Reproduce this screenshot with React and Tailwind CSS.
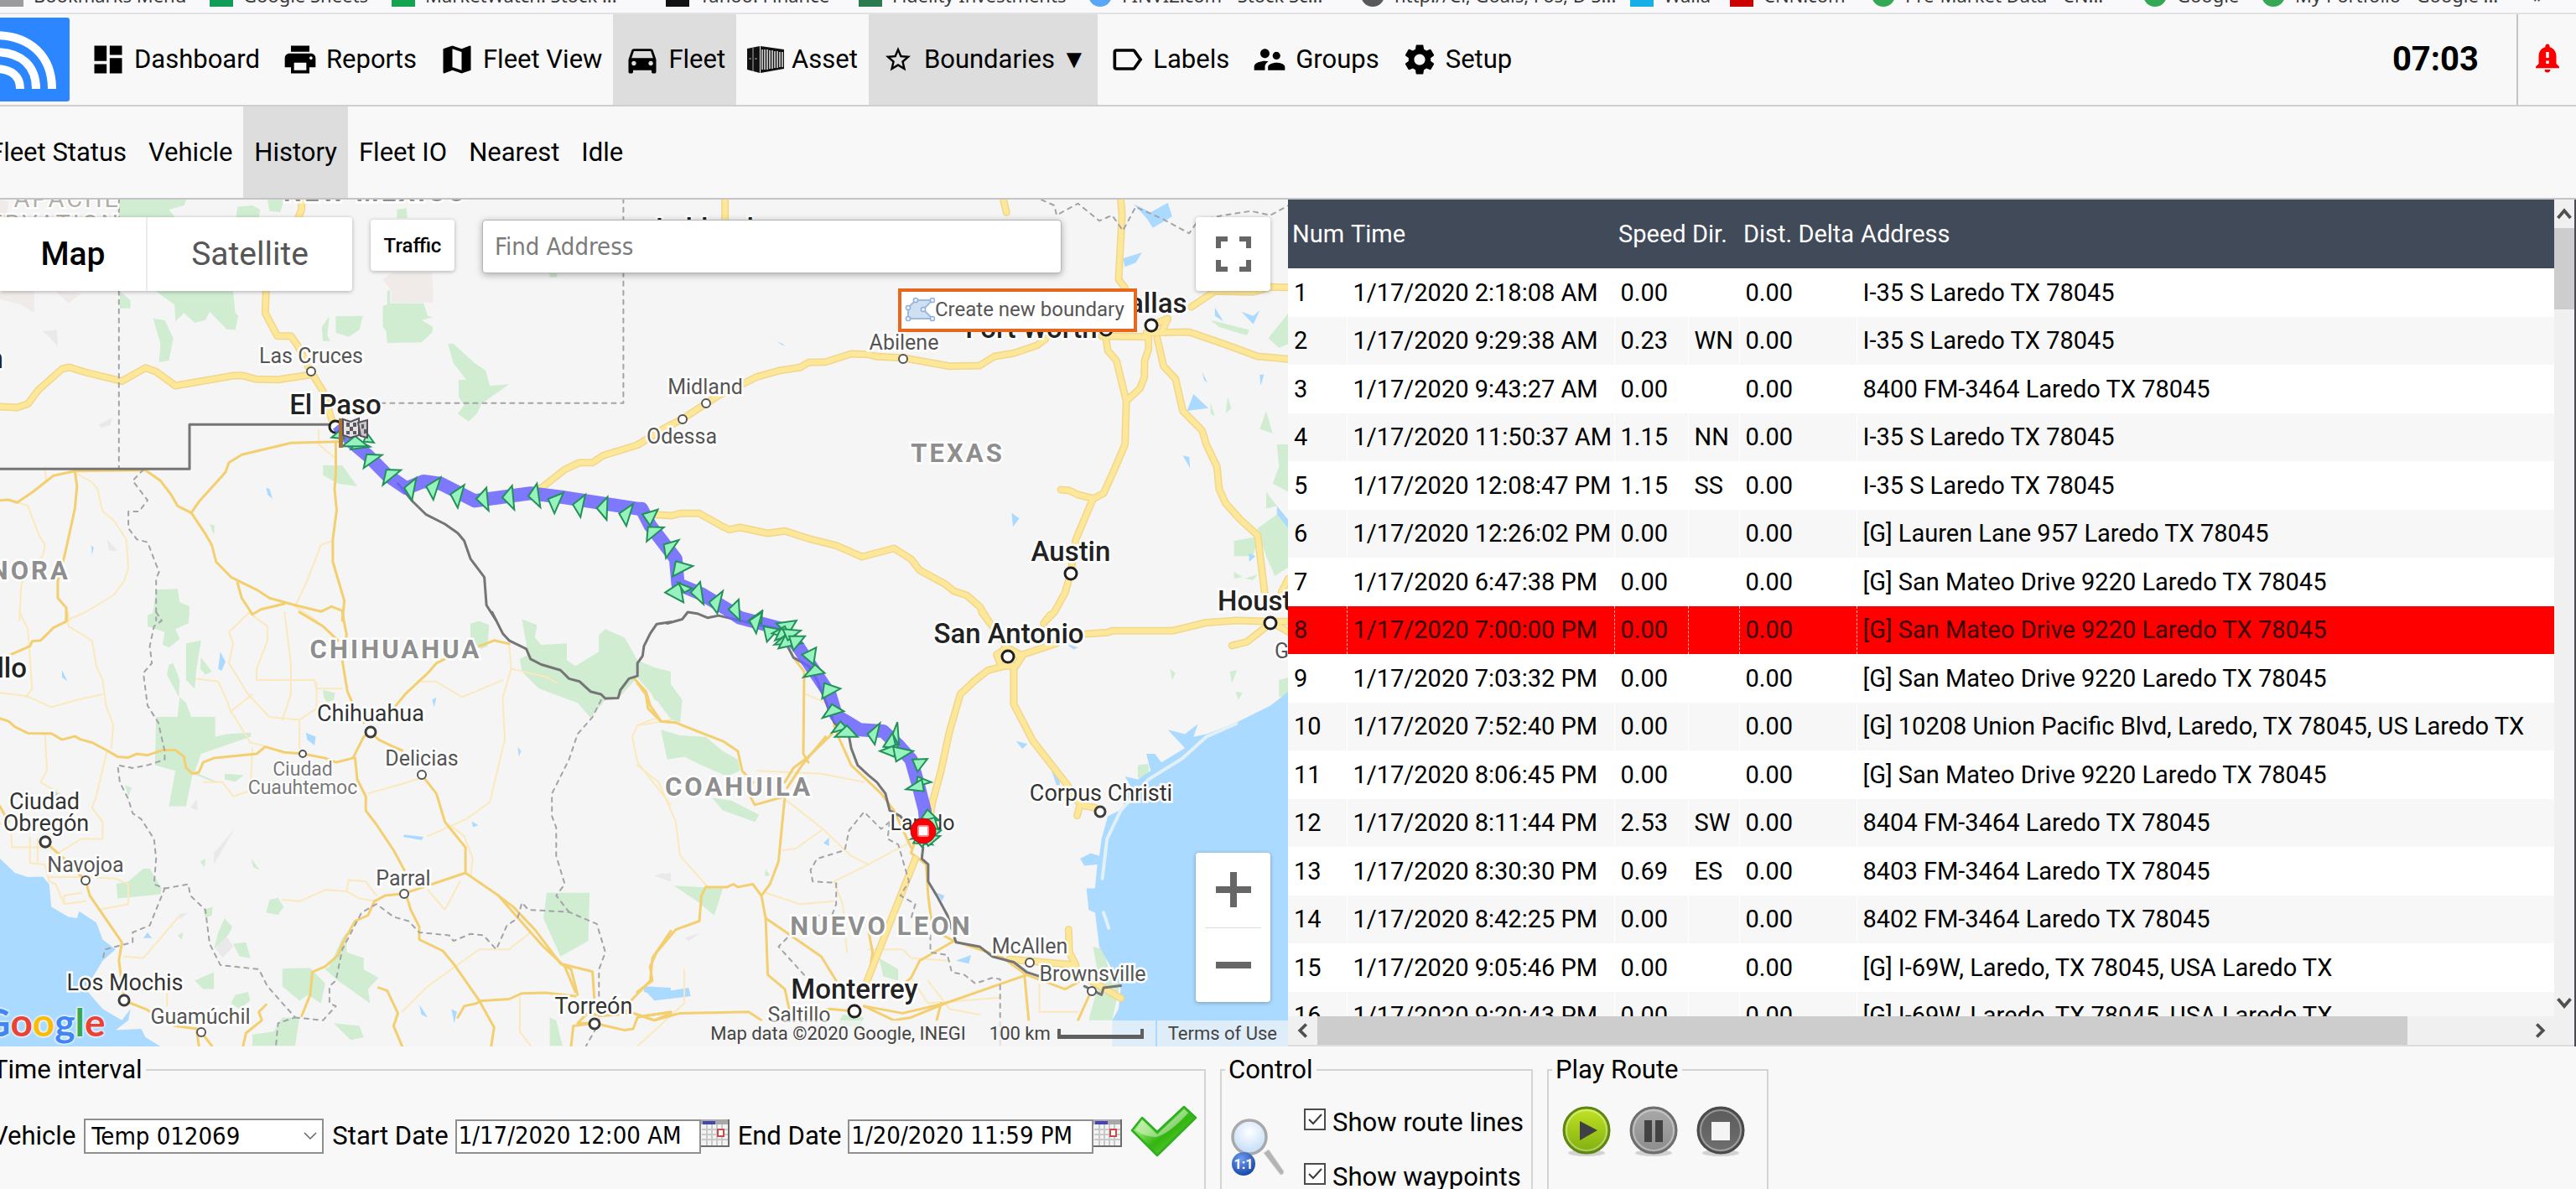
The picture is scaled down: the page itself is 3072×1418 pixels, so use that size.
import React from "react";
import {
  MdDashboard,
  MdPrint,
  MdMap,
  MdDirectionsCar,
  MdStarBorder,
  MdLabelOutline,
  MdSupervisorAccount,
  MdSettings,
  MdNotificationImportant,
} from "react-icons/md";

/* ---------- map tiles: each tile has its own grid ---------- */
const TILES = {
  nw: [0, -8, 1.96, 3],
  ne: [760, -8, 1.96, 3],
  sw: [0, 492, 1.96, 2.958],
  se: [760, 492, 1.96, 2.958],
};

function pts(tile, text) {
  const [ox, oy, sx, sy] = TILES[tile];
  return text
    .trim()
    .split(/\s+/)
    .map((p) => {
      const [x, y] = p.split(",").map(Number);
      return `${Math.round((ox + x / sx) * 10) / 10},${Math.round((oy + y / sy) * 10) / 10}`;
    })
    .join(" ");
}

const GREEN = {
  nw: [
    "278,20 437,20 430,45 395,60 410,90 278,90",
    "552,88 555,50 590,45 608,60 605,88",
    "625,20 665,20 655,70 630,65",
    "928,60 950,55 952,90 928,90",
    "365,352 545,352 550,430 557,440 550,490 530,488 490,425 480,455 455,465 430,430 410,460 408,400 380,370",
    "280,352 305,385 305,413 280,413",
    "358,450 385,455 405,520 395,600 372,605 375,540",
    "755,530 752,480 770,440 765,510 772,530",
    "785,442 848,440 840,490 815,515 785,500",
    "905,350 912,350 912,395 990,395 1000,440 1012,445 985,455 1012,480 1010,500 985,535 905,537 903,495 895,480 895,405 905,400",
    "1047,540 1060,540 1110,610 1135,635 1145,690 1190,685 1125,755 1115,790 1095,818 1070,790 1085,760 1072,730 1072,670 1090,668 1060,610",
    "755,975 800,975 835,1050 790,1040 755,1010",
    "365,1420 415,1417 420,1465 443,1480 440,1530 355,1530",
    "490,1185 502,1190 500,1225",
    "1285,285 1302,285 1302,302 1285,302",
  ],
  ne: [
    "1340,455 1430,490 1425,510 1360,480",
    "1475,520 1522,430 1522,540 1500,555",
    "1470,780 1485,860 1455,845",
    "1495,900 1522,900 1522,1070 1485,1040 1500,980",
    "1470,1070 1495,1120 1470,1130",
    "1450,1200 1500,1145 1522,1180 1522,1340 1490,1370 1470,1300 1455,1230",
    "1395,1245 1450,1230 1440,1300 1395,1300",
    "1340,750 1350,800 1340,790",
    "1380,730 1388,770 1375,790",
    "1395,1355 1415,1375 1395,1380",
    "1420,1380 1450,1365 1440,1385",
  ],
  sw: [
    "365,0 443,0 440,40 410,60 420,95 395,125 380,115 385,70 345,50 345,10",
    "435,110 470,100 460,190 455,270 435,240",
    "395,185 405,180 420,240 418,300 390,220",
    "470,160 495,210 480,220 468,200",
    "420,300 435,320 447,370 503,370 503,440 530,430 587,425 585,440 470,500 455,565 510,600 500,600 450,570 435,685 395,685 400,640 410,560 362,540 365,370 415,370",
    "525,570 570,575 550,598 525,590",
    "1100,40 1120,32 1143,45 1140,120 1125,130 1100,100",
    "1220,25 1255,45 1250,90 1265,115 1325,110 1325,170 1345,190 1400,140 1400,80 1415,60 1460,90 1490,170 1490,230 1445,305 1415,310 1380,372 1350,320 1260,270 1220,210 1215,165 1235,150",
    "1490,170 1530,195 1568,210 1568,330 1530,310 1510,250 1490,230",
    "755,275 783,285 780,310 765,318 757,300",
    "1278,990 1378,990 1375,1160 1310,1215 1270,1080",
    "272,958 300,950 335,905 350,905 378,975 375,995 275,1010",
    "622,1060 630,1015 650,1008 663,1040 650,1068",
    "660,1258 725,1255 760,1310 750,1380 720,1350 700,1370 660,1320",
    "770,1250 800,1150 810,1130 810,1200 850,1220 850,1260 885,1290 860,1330 865,1380 790,1300 760,1260",
    "500,1190 510,1130 525,1080 543,1110 535,1135",
    "545,1170 575,1165 585,1220 560,1215",
    "540,1380 550,1350 580,1340 585,1370 560,1400",
    "590,1490 640,1480 660,1430 700,1430 690,1530 590,1530",
    "780,1450 840,1460 850,1500 820,1510",
    "1285,1430 1300,1440 1315,1530 1285,1530",
    "455,1300 500,1270 500,1330 475,1330",
    "468,880 480,870 478,900",
    "587,870 607,910 592,900",
    "475,1050 497,1040 495,1070 480,1078",
    "415,1140 428,1130 425,1155",
    "292,610 308,620 300,650",
  ],
  se: [
    "0,175 60,215 105,310 100,390 80,380 40,300 0,230",
    "55,415 100,435 160,440 200,490 235,520 240,560 210,580 150,540 110,510 70,520",
    "175,655 220,665 285,715 275,740 200,700",
    "85,965 200,975 180,1070 140,1020",
    "565,1220 610,1260 610,1300 575,1285",
    "1170,540 1195,535 1195,580 1170,585",
    "1065,1180 1090,1190 1100,1250 1130,1300 1110,1440 1055,1440 1080,1300",
    "1245,200 1258,215 1250,240",
    "1385,210 1402,205 1390,250",
    "1398,280 1415,285 1405,310",
    "1500,240 1522,230 1522,290 1500,300",
    "480,1420 530,1430 520,1470 470,1450",
    "300,905 310,930 298,930",
  ],
};

const BEIGE = {
  nw: [
    "915,285 1010,285 1013,392 915,392 915,350 895,310",
    "0,352 80,352 80,430 50,400 0,380",
    "130,352 190,360 160,395",
    "0,25 20,30 15,90 0,90",
  ],
};

const SHADE = {
  nw: ["100,495 133,490 135,550 118,520", "230,830 262,805 258,830 238,840", "250,1240 275,1280 255,1280"],
  sw: [
    "520,1120 545,1180 520,1220 505,1190",
    "445,690 460,660 462,700",
    "500,850 550,760 500,890",
    "1530,930 1568,920 1568,950",
    "440,1060 420,1085 420,1065",
  ],
  se: ["40,930 60,920 80,945", "110,1150 150,1130 120,1160"],
};

const WATER = {
  nw: ["622,1055 630,1060 637,1095 626,1080", "213,1260 219,1270 215,1295"],
  ne: [
    "1160,40 1200,70 1240,35 1250,85 1205,125 1190,90",
    "1135,235 1180,213 1165,250 1140,265",
    "325,532 345,550 340,540",
    "1350,410 1370,460 1350,440",
    "1412,425 1440,440 1455,420 1440,470",
    "1300,720 1335,770 1285,780",
    "1320,640 1333,680 1325,670",
    "1275,940 1290,945 1292,985",
    "875,1145 893,1165 878,1195",
    "1455,650 1465,650 1457,690",
    "1430,1290 1445,1300 1430,1320",
    "1495,1120 1522,1170 1522,1200 1495,1150",
  ],
  sw: [
    "0,870 35,920 65,935 100,933 115,960 120,1040 160,1075 180,1080 185,1055 225,1095 240,1155 270,1190 240,1230 200,1330 240,1400 285,1440 305,1400 300,1440 270,1475 330,1470 340,1500 375,1532 0,1532",
    "515,140 527,175 518,208 510,200",
    "145,205 158,245 145,230",
    "715,425 738,440 735,470 718,450",
    "1010,310 1020,300 1015,335",
    "945,785 990,793 985,805 942,793",
    "1505,1320 1568,1325 1568,1365 1505,1340",
    "335,1150 345,1130 355,1150",
    "1210,475 1218,490 1213,510",
    "1103,738 1118,752 1105,758",
    "980,1385 1000,1430 985,1420",
    "1055,1400 1068,1410 1062,1450",
    "130,625 137,640 130,650",
  ],
  se: [
    "1522,280 1480,330 1400,390 1330,430 1300,440 1310,395 1280,430 1240,415 1228,395 1280,480 1225,530 1210,500 1190,500 1200,560 1170,590 1140,580 1155,620 1130,650 1140,690 1100,720 1085,800 1080,860 1060,850 1035,870 1045,895 1075,890 1070,975 1050,975 1055,1050 1070,1060 1080,1180 1110,1260 1130,1330 1125,1400 1110,1440 1110,1532 1522,1532",
    "15,1330 60,1340 120,1325 125,1355 40,1370",
    "885,455 912,465 900,482",
    "745,1230 780,1210 775,1240",
    "435,815 448,795 448,825",
    "965,545 985,570 988,610 980,610",
    "700,990 718,1000 712,1020",
    "1000,110 1030,125 1020,132",
  ],
};

const ROAD_MINOR = {
  nw: [
    "180,1005 215,1035 228,1060 240,1140 265,1170 295,1240 300,1340 290,1390 265,1440 200,1500 155,1530",
    "40,1108 65,1120 90,1220 105,1260 100,1300 70,1340 50,1400 45,1530",
    "745,850 745,900 780,945",
    "690,1480 720,1380 750,1260 778,1245",
    "690,1480 740,1530",
    "105,980 108,1030",
  ],
  sw: [
    "160,0 160,50 215,100 225,190 240,240 248,330 265,400 260,480",
    "0,285 60,295 120,335 180,310 240,290",
    "45,0 65,60 75,270 60,300",
    "105,430 110,560 95,600 140,640",
    "250,490 225,650 215,690 240,740 240,800 190,800 130,855",
    "580,0 625,50 625,100 600,200 600,240 735,240 740,270 800,270",
    "580,5 535,70 545,110 535,180 580,290 630,370 700,380 700,480",
    "665,0 680,180 680,290 660,380",
    "740,250 740,340 700,380",
    "590,290 540,350 585,460 625,475",
    "460,235 510,245 530,310 540,355",
    "1190,112 1195,200 1175,300 1180,450 1145,670 1090,730 1000,790",
    "985,245 1020,245 1080,300 1175,240",
    "1195,200 1280,230 1300,250",
    "860,640 930,610 985,585",
    "660,1015 700,1020 760,980 810,985 840,1010 880,1020",
    "810,985 815,945 855,950 880,1000",
    "1240,1130 1190,1190 1120,1190 1000,1320 940,1410",
    "1000,980 1040,1050 1075,950",
    "1055,755 1085,790 1105,870 1100,930",
    "420,1070 370,1160 335,1220 290,1215",
    "475,600 520,600 545,650 585,630 590,480",
    "0,745 25,760 28,830 105,830",
    "70,795 70,885 105,890 115,950 130,960 150,1030 200,1020",
    "88,800 88,880",
    "150,1030 150,1000 190,990",
    "115,935 200,935 270,940 300,960 300,1030 230,1050",
    "390,1310 390,1390",
    "1215,1360 1215,1480 1240,1530",
    "1568,380 1490,400 1478,440 1490,530 1568,680",
  ],
  se: [
    "0,400 50,370",
    "0,540 50,600 90,740 100,860 165,970",
    "345,660 430,760 500,860 540,890 460,950 480,1030 490,1200",
    "300,990 380,1030 460,1020",
    "340,840 370,835 430,770",
    "640,810 540,890",
    "395,290 440,320",
    "280,560 430,570 530,600",
    "540,1190 620,1190 640,1220 730,1230",
    "940,1290 940,1410 1030,1410",
    "640,1290 680,1380 850,1360",
    "680,1300 730,1400 800,1420",
    "0,1532 110,1380 110,1260",
  ],
};

const ROAD_MID = {
  nw: [
    "0,1100 20,1098 40,1108 75,1072 125,1012 175,995 340,992 375,1030 400,1080 415,1120 447,1145 480,1220 495,1260 505,1320 540,1375 600,1420 630,1450 690,1475 750,1498 775,1480 800,1495",
    "175,995 180,1050 175,1130 165,1200 152,1290 135,1390 135,1450 155,1485 155,1530",
    "447,1145 465,1105 527,1000 535,965 565,937 680,895 790,890",
    "785,890 785,1000 782,1060 787,1135 778,1240 778,1320 805,1460 800,1530",
    "555,1395 565,1450 590,1508 610,1490 665,1470",
  ],
  sw: [
    "0,375 20,385 35,405 65,427 120,428 145,450 175,438 190,450 215,460 250,488 275,510 300,513 320,500 345,505 380,487 410,487 430,510 435,550 450,570 465,565 475,530 500,515 600,500 620,475 665,495 708,500 760,515 785,530 825,515 850,440 866,423",
    "800,0 810,80 800,170 812,280 825,325 850,390",
    "700,0 755,50 790,100",
    "25,150 70,120 75,103 95,100 125,55 155,33 155,0",
    "925,330 950,285 1000,215 1020,180 1040,165",
    "1120,120 1155,100 1190,112",
    "830,515 835,590 855,650 855,700 880,750 920,840 945,910",
    "866,423 885,450 920,475 940,488",
    "985,573 1020,640 1040,740 1088,830 1088,920 1165,1000 1200,1040 1250,1120 1310,1240 1335,1260 1350,1350",
    "1165,1000 1200,1060 1270,1180 1320,1250 1345,1340",
    "1088,920 990,970 944,993 900,1000 875,1020 860,1070 830,1090 800,1170 790,1210 760,1250 730,1270 725,1350 705,1425",
    "950,1000 960,1050 980,1110 980,1155 1035,1195 1060,1240 1120,1370 1155,1465 1148,1532",
    "1310,1240 1385,1268 1389,1360",
    "1070,1430 1085,1390 1115,1380 1120,1372 1190,1365 1220,1345 1275,1343 1345,1355",
    "885,1325 905,1335 930,1415 920,1460 940,1532",
    "1389,1450 1340,1460 1335,1530",
    "1389,1450 1350,1450 1370,1420 1400,1420",
    "1389,1450 1460,1475 1480,1470 1490,1430 1568,1410",
    "1475,1370 1520,1300 1525,1220 1568,1125",
    "1400,1425 1480,1415 1530,1440 1568,1415",
    "1450,1400 1500,1425 1568,1412",
    "105,810 150,870 200,947 210,1000 285,1165 278,1230 285,1310 291,1371 340,1400 410,1460 460,1470 470,1482 495,1530",
    "460,1480 465,1530",
    "622,1385 605,1410 612,1440 575,1485 568,1532",
    "0,685 20,740",
    "1480,230 1510,280 1520,330 1545,385 1568,388",
  ],
  se: [
    "0,250 20,290 25,340 55,385 90,390 140,420 200,455 235,490 245,560 270,600 260,640 275,680 345,650",
    "345,650 330,880 310,960 290,1000 270,960 235,970 225,960 210,970 160,970 150,1000 145,1090 90,1120 45,1200 30,1250 35,1300 0,1340",
    "345,600 365,550 400,510 455,430",
    "350,620 385,540 440,440",
    "365,160 390,210 388,500 400,530",
    "460,400 470,440 500,540 570,640 600,700 640,830",
    "290,1000 300,1080 430,1215 465,1300",
    "300,1080 305,1280 345,1330 355,1400",
    "0,1420 40,1440 100,1415 260,1410 290,1440",
    "655,780 640,850 675,890 680,1000 690,1120 740,1160",
    "740,1160 660,1230 640,1290 600,1340",
    "740,1160 850,1215 910,1280 1000,1330 1050,1290",
    "905,1280 915,1440",
    "540,1120 550,1200 540,1300",
    "1060,1340 1030,1440",
    "710,1380 700,1440",
    "530,1390 600,1440 640,1430 720,1380 910,1280",
    "530,1390 620,1415 720,1380",
    "400,1415 450,1400 507,1408",
  ],
};

const ROAD_MAIN = {
  nw: [
    "0,765 40,768 65,755 90,705 145,630 162,624 200,642 285,674 340,626 365,640 410,690 545,654 565,653 600,667 650,668 727,650",
    "705,20 705,60 697,90",
    "622,345 620,430 648,512 680,512 695,545 727,640 755,710 775,810",
    "1240,1080 1270,1050 1320,990 1355,965 1385,965 1410,940 1490,902 1568,830",
  ],
  ne: [
    "0,902 60,845 105,809 161,754 190,725 245,685 280,658 335,635 380,625 400,607 440,605 500,576 540,578 560,586 621,590 730,620 800,618 835,585 880,574 935,545 955,522",
    "25,1150 80,1155 100,1147 145,1147 195,1190 215,1205 240,1197 305,1218 345,1210 400,1237 465,1262 525,1302 600,1272 640,1310 660,1350 720,1400 740,1425 770,1440 800,1480 820,1530",
    "1130,20 1133,80 1125,310 1140,340",
    "1295,408 1350,352 1440,355 1480,337 1522,338",
    "1085,512 1190,515 1200,500 1290,498 1370,540 1450,585 1522,595",
    "1095,520 1100,565 1120,600 1143,745 1140,900 1115,990 1090,1075 1065,1095 1025,1240 1013,1362 1000,1430 975,1500 955,1530",
    "1195,520 1195,560 1186,600 1185,660 1175,700 1143,745",
    "1215,520 1230,620 1258,665 1275,780 1320,850 1330,900 1355,980 1360,1060 1375,1110 1410,1170 1450,1225 1460,1350 1468,1450",
    "990,1062 1010,1065 1030,1080 1065,1093",
    "205,20 205,95",
    "855,20 863,70",
    "1505,1430 1522,1380",
    "1201,475 1240,450 1225,500 1190,500",
  ],
  se: [
    "805,0 850,90 866,140",
    "965,10 950,40",
    "866,125 900,155 885,190 850,190 840,150 866,125",
    "890,155 980,110",
    "1050,77 1100,72 1110,66 1250,66 1330,37 1400,30 1480,33 1522,33",
    "1480,40 1450,75 1425,105 1390,118",
    "1480,33 1522,70",
    "860,190 820,205 790,240 755,290 730,420 710,560 690,670 680,760",
    "880,190 880,325 925,455 1005,610 1035,680 1070,690",
    "1035,680 1028,718",
    "1008,1120 1010,1200 1025,1245 870,1225",
    "1010,1245 1060,1300 1130,1362",
    "650,870 600,1060 545,1270 530,1330",
  ],
};

const STATE_LINES = {
  nw: [
    "278,20 278,985",
    "1457,20 1457,752 890,752",
    "335,990 310,1030 345,1100 325,1140 300,1140 300,1200 320,1240 345,1250 355,1290 365,1330 372,1355 365,1380 365,1530",
  ],
  ne: [
    "945,25 975,45 980,80 1030,38 1080,100 1110,80 1135,135 1165,50 1230,95 1290,145 1310,100 1370,80 1435,65 1480,80 1522,45",
  ],
  sw: [
    "365,0 378,30 360,50 350,120 355,180 335,215 345,330 370,390 385,490 385,520 345,540 310,550 275,540 280,600 300,660 310,710 330,730 360,800 365,870 360,960 385,975 350,1105 310,1130 310,1165 245,1190 240,1230",
    "385,975 440,960 445,1000 480,1050 490,1170 515,1245 605,1260 625,1320 690,1430 650,1450 645,1530",
    "690,1430 755,1440 785,1390 770,1380 770,1320 785,1300 800,1190 845,1060 880,1030 920,1075 955,1090 980,1130 1050,1140 1060,1160 1100,1135 1130,1140 1160,1190 1185,1105 1210,1080 1220,1025 1235,1050 1330,1058 1395,1100 1415,1200 1400,1260 1400,1450 1370,1530",
    "1405,310 1385,370 1350,430 1330,520 1290,640 1290,720 1300,760 1300,860 1320,960 1300,1000 1330,1058",
  ],
  se: [
    "590,740 570,765 530,705 495,770 485,840 420,870 405,910 410,950 465,955 465,1030 455,1070 420,1070",
    "590,740 585,800 610,820 635,950 615,1000 650,1030 640,1080",
    "685,1140 685,1200 725,1210 735,1270 765,1280 790,1310 830,1290 848,1295 848,1532",
    "350,1150 330,1180 390,1280",
  ],
};

const COUNTRY_LINES = {
  nw: [
    "0,988 443,988 443,829 780,829",
    "930,1040 965,1105 995,1150 1040,1185 1070,1217 1085,1245 1100,1310 1132,1375 1137,1475 1160,1530",
  ],
  sw: [
    "1150,0 1175,75 1190,100 1230,130 1240,165 1265,185 1310,205 1330,235 1355,245 1380,280 1405,290 1415,305 1445,303 1450,275 1470,235 1490,225 1490,180 1502,155 1505,120 1520,75 1535,42 1568,35",
  ],
  se: [
    "70,40 105,25 118,0 140,5 165,20 190,12 240,30 330,60 365,160 400,190 420,240 460,390 495,440 500,480 515,540 540,575 560,600 580,640 590,700 615,720 650,790 668,830 665,870 680,890 680,950 700,1000 725,1070 745,1165 800,1180 830,1215 880,1235 910,1270 940,1285",
    "1045,1320 1085,1350 1090,1325 1130,1318",
  ],
};

const ROUTE = [
  pts("nw", "790,830 825,895 860,940 905,1010 950,1057 990,1032 1030,1040 1110,1102 1240,1075 1320,1090 1490,1130"),
  pts("ne", "10,1130 30,1190 90,1310 95,1400 150,1435 210,1490"),
  pts("se", "240,20 340,60 375,120 410,200 450,290 465,365 520,415 575,420 610,470 640,520 655,600 672,700 675,760"),
].join(" ");

const ARROWS = {
  nw: [
    "850,985 857,935 893,938", "895,1045 903,990 937,992", "963,1100 945,1055 973,1020", "1013,1098 996,1050 1030,1018",
    "1070,1127 1053,1078 1085,1045", "1142,1137 1113,1095 1137,1055", "1202,1133 1174,1090 1197,1048", "1235,1085 1255,1040 1263,1125",
    "1296,1147 1281,1095 1317,1073", "1357,1160 1339,1115 1368,1080", "1418,1170 1395,1128 1420,1088", "1464,1192 1447,1147 1480,1113",
    "775,875 795,850 805,880", "850,890 858,860 874,893", "820,918 835,885 865,908", "800,907 830,870 860,907",
  ],
  ne: [
    "30,1190 12,1150 48,1133", "22,1247 25,1195 62,1197", "67,1307 62,1258 97,1242", "83,1372 90,1318 130,1335",
    "65,1430 100,1395 108,1465", "95,1395 128,1415 110,1430", "155,1472 125,1430 147,1392", "187,1505 168,1465 200,1425", "240,1530 213,1490 237,1455",
    "260,1530 292,1495 290,1540",
  ],
  se: [
    "278,75 262,30 292,0", "303,105 295,50 330,60", "325,40 372,30 352,80", "315,75 345,50 360,95", "322,100 335,60 375,70", "320,115 350,75 372,110",
    "330,128 345,85 385,110", "340,60 382,65 352,100", "365,135 355,85 392,85",
    "412,185 385,150 418,125", "388,230 415,185 438,215", "432,305 437,250 475,270", "433,373 455,325 483,350",
    "455,425 475,385 490,410", "462,440 490,400 515,440", "555,467 538,430 567,392", "597,430 608,388 612,470",
    "575,475 597,425 605,480", "567,490 610,465 600,510", "605,527 598,475 645,490", "655,563 643,520 678,518",
    "652,615 655,580 687,600", "628,625 665,590 670,632", "663,730 678,697 705,735",
    "655,740 695,725 705,775", "690,760 710,770 685,800", "640,800 670,770 705,795", "645,815 660,780 690,820", "680,825 665,785 708,790", "665,828 650,800 690,790",
  ],
};

function flat(source) {
  return Object.keys(source).flatMap((tile) => source[tile].map((p) => pts(tile, p)));
}

function Areas({ source, className }) {
  return (
    <g className={className}>
      {flat(source).map((p, i) => (
        <polygon key={i} points={p} />
      ))}
    </g>
  );
}

function Lines({ source, className }) {
  return (
    <g className={className} fill="none" strokeLinejoin="round" strokeLinecap="round">
      {flat(source).map((p, i) => (
        <polyline key={i} points={p} />
      ))}
    </g>
  );
}

const REGIONS = [
  [472, 547, "CHIHUAHUA"],
  [1142, 313, "TEXAS"],
  [881, 711, "COAHUILA"],
  [1051, 877, "NUEVO LEON"],
  [448, 2, "NEW MEXICO"],
];

const CITIES = [
  [400, 256, 400, 271, "El Paso"],
  [1277, 431, 1277, 446, "Austin"],
  [1203, 529, 1202, 545, "San Antonio"],
  [1230, 165, 1319, 155, "Fort Worth"],
  [1019, 953, 1019, 968, "Monterrey"],
  [1370, 135, 1373, 150, "Dallas"],
];

const TOWNS = [
  [442, 622, 442, 635, "Chihuahua"],
  [53, 727, 54, 766, "Ciudad"],
  [55, 753, 54, 766, "Obregón"],
  [149, 943, 148, 955, "Los Mochis"],
  [708, 971, 709, 983, "Torreón"],
  [1313, 717, 1312, 730, "Corpus Christi"],
];

const SMALL_TOWNS = [
  [371, 195, 371, 205, "Las Cruces"],
  [1078, 179, 1077, 190, "Abilene"],
  [841, 232, 842, 243, "Midland"],
  [813, 291, 814, 262, "Odessa"],
  [503, 675, 503, 686, "Delicias"],
  [102, 802, 102, 812, "Navojoa"],
  [481, 818, 482, 828, "Parral"],
  [239, 983, 240, 993, "Guamúchil"],
  [1228, 899, 1228, 910, "McAllen"],
  [1303, 932, 1302, 944, "Brownsville"],
];

function MapCanvas() {
  return (
    <svg
      className="block h-full w-full bg-[#f5f5f5] font-['Roboto',sans-serif]"
      viewBox="0 0 1536 1010"
      preserveAspectRatio="xMinYMin slice"
      aria-label="Route map"
    >
      <Areas source={BEIGE} className="fill-[#f0ebe8]" />
      <Areas source={SHADE} className="fill-[#e9e9e9]" />
      <Areas source={GREEN} className="fill-[#d0ecd1]" />
      <Areas source={WATER} className="fill-[#aadaff]" />
      <g fill="none" className="stroke-[#e3f0f4]" strokeWidth="4" strokeLinecap="round">
        <polyline points={pts("se", "1400,393 1330,440 1275,515 1195,590 1130,700 1098,800 1087,940")} />
        <polyline points={pts("se", "1090,1060 1102,1115")} />
      </g>
      <Lines source={ROAD_MINOR} className="stroke-[#fbe9bd] stroke-2" />
      <Lines source={ROAD_MID} className="stroke-[#f4cf70] stroke-3" />
      <Lines source={ROAD_MAIN} className="stroke-[#f3d68a] stroke-9" />
      <Lines source={ROAD_MAIN} className="stroke-[#fde799] stroke-6" />
      <Lines source={STATE_LINES} className="stroke-[#a3a3a8] stroke-2 [stroke-dasharray:5_6]" />
      <Lines source={COUNTRY_LINES} className="stroke-[#757575] stroke-3" />

      <g className="fill-[#8e8e8e] stroke-white text-[31px] font-bold tracking-widest [paint-order:stroke]" strokeWidth="5" textAnchor="middle">
        {REGIONS.map(([x, y, name]) => (
          <text key={name} x={x} y={y}>{name}</text>
        ))}
        <text x="84" y="453" textAnchor="end">SONORA</text>
      </g>
      <g className="fill-[#b3afa6] stroke-white text-[29px] tracking-widest [paint-order:stroke]" strokeWidth="4" textAnchor="end">
        <text x="144" y="9">APACHE</text>
        <text x="144" y="39">RESERVATION</text>
      </g>
      <g className="fill-[#222222] stroke-white text-[33px] font-medium [paint-order:stroke]" strokeWidth="5">
        <g textAnchor="middle">
          {CITIES.map(([x, y, , , name]) => (
            <text key={name} x={x} y={y}>{name}</text>
          ))}
        </g>
        <text x="845" y="46" textAnchor="middle">Lubbock</text>
        <text x="32" y="570" textAnchor="end">Hermosillo</text>
        <text x="4" y="201" textAnchor="end">Tucson</text>
        <text x="1452" y="490">Houston</text>
      </g>
      <g className="fill-[#333333] stroke-white text-[27px] [paint-order:stroke]" strokeWidth="5" textAnchor="middle">
        {TOWNS.map(([x, y, , , name]) => (
          <text key={name} x={x} y={y}>{name}</text>
        ))}
      </g>
      <g className="fill-[#555555] stroke-white text-[25px] [paint-order:stroke]" strokeWidth="5" textAnchor="middle">
        {SMALL_TOWNS.map(([x, y, , , name]) => (
          <text key={name} x={x} y={y}>{name}</text>
        ))}
        <text x="1100" y="752" className="fill-[#333333]">Laredo</text>
        <text x="953" y="981">Saltillo</text>
        <text x="1520" y="547" textAnchor="start">Galveston</text>
      </g>
      <g className="fill-[#7a7a7a] stroke-white text-[23px] [paint-order:stroke]" strokeWidth="4" textAnchor="middle">
        <text x="361" y="687">Ciudad</text>
        <text x="361" y="709">Cuauhtemoc</text>
      </g>
      <g className="fill-white stroke-[#1f1f1f] stroke-3">
        {CITIES.map(([, , cx, cy, name]) => (
          <circle key={name} cx={cx} cy={cy} r="7" />
        ))}
        <circle cx="1515" cy="505" r="7" />
      </g>
      <g className="fill-white stroke-[#3c3c3c] stroke-3">
        {TOWNS.map(([, , cx, cy, name]) => (
          <circle key={name} cx={cx} cy={cy} r="6" />
        ))}
      </g>
      <g className="fill-white stroke-[#555555] stroke-2">
        {SMALL_TOWNS.map(([, , cx, cy, name]) => (
          <circle key={name} cx={cx} cy={cy} r="5" />
        ))}
        <circle cx="361" cy="661" r="4" />
      </g>

      <polyline points={ROUTE} fill="none" className="stroke-[#6961ff]/85 stroke-16" strokeLinejoin="round" />
      <g className="fill-[#97f3bd] stroke-[#22915a] stroke-2" strokeLinejoin="miter">
        {flat(ARROWS).map((p, i) => (
          <polygon key={i} points={p} />
        ))}
      </g>

      <g>
        <rect x="404" y="261" width="5" height="35" fill="#a8743a" />
        <path d="M409 262 L418 265 L428 261 V281 L418 284 L409 281 Z" fill="#e6e2e4" stroke="#55505a" strokeWidth="2" />
        <path d="M427 266 L438 263 V284 L430 282 Z" fill="#c9c5c9" stroke="#55505a" strokeWidth="2" />
        <path d="M413 266h4v5h-4z M421 266h4v5h-4z M417 271h4v5h-4z M413 276h4v4h-4z M421 276h4v4h-4z M431 268h3v5h-3z M434 274h3v5h-3z" fill="#5d5962" />
      </g>
      <g>
        <circle cx="1101" cy="753" r="15" fill="#fb0007" stroke="#b51414" strokeWidth="1" />
        <rect x="1095" y="747" width="12" height="12" rx="2" fill="#ffffff" stroke="#ff8a8a" strokeWidth="2" />
      </g>
    </svg>
  );
}

/* ---------- header ---------- */
function ContainerIcon({ className }) {
  return (
    <svg viewBox="0 0 44 32" className={className} aria-hidden="true">
      <path d="M0 3 L15 0 V32 L0 28 Z" fill="#111" />
      <path d="M16 0 L44 4 V27 L16 32 Z" fill="#111" />
      <path d="M7 2V30 M2 15h3 M9 15h3" stroke="#aaa" strokeWidth="1" />
      <path d="M18 4V28 M21 4V28 M24 4V28 M27 5V27 M30 5V27 M33 6V26 M36 6V26 M39 7V25 M42 7V25" stroke="#f4f4f4" strokeWidth="1.4" />
    </svg>
  );
}

const NAV = [
  { label: "Dashboard", icon: MdDashboard, size: "h-11 w-11" },
  { label: "Reports", icon: MdPrint, size: "h-11 w-11" },
  { label: "Fleet View", icon: MdMap, size: "h-11 w-11" },
  { label: "Fleet", icon: MdDirectionsCar, size: "h-11 w-11", active: true },
  { label: "Asset", icon: ContainerIcon, size: "h-8 w-11" },
  { label: "Boundaries ▼", icon: MdStarBorder, size: "mx-1 h-9 w-9", active: true },
  { label: "Labels", icon: MdLabelOutline, size: "h-11 w-11" },
  { label: "Groups", icon: MdSupervisorAccount, size: "h-11 w-11" },
  { label: "Setup", icon: MdSettings, size: "h-11 w-11" },
];

const BOOKMARKS = [
  { text: "Bookmarks Menu", color: "bg-[#9b9b9b]", width: "w-[250px]" },
  { text: "Google Sheets", color: "bg-[#109d58]", width: "w-[217px]" },
  { text: "MarketWatch: Stock ...", color: "bg-[#14a351]", width: "w-[327px]" },
  { text: "Yahoo! Finance", color: "bg-[#111111]", width: "w-[230px]" },
  { text: "Fidelity Investments", color: "bg-[#2c7a4f]", width: "w-[274px]" },
  { text: "FINVIZ.com - Stock Sc...", color: "bg-[#58a6f5] rounded-full", width: "w-[325px]" },
  { text: "http://Cr, Goals, Fos, D S...", color: "bg-[#58595b] rounded-full", width: "w-[321px]" },
  { text: "Walla", color: "bg-[#18aee8]", width: "w-[119px]" },
  { text: "CNN.com", color: "bg-[#cc0000]", width: "w-[169px]" },
  { text: "Pre-Market Data - CN...", color: "bg-[#34a853] rounded-full", width: "w-[324px]" },
  { text: "Google", color: "bg-[#34a853] rounded-full", width: "w-[141px]" },
  { text: "My Portfolio - Google ...", color: "bg-[#34a853] rounded-full", width: "w-[324px]" },
];

function BookmarkBar() {
  return (
    <div className="flex h-[17px] shrink-0 items-start overflow-hidden border-b-2 border-[#e2e2e4] bg-[#f9f9fb] font-['Noto_Sans',sans-serif] text-[22px] leading-8 text-[#3a3a3a]">
      {BOOKMARKS.map((b) => (
        <div key={b.text} className={`-mt-[22px] flex shrink-0 items-center gap-3 overflow-hidden whitespace-nowrap ${b.width}`}>
          <span className={`h-7 w-7 shrink-0 ${b.color}`} />
          <span>{b.text}</span>
        </div>
      ))}
      <span className="-mt-[22px]">»</span>
    </div>
  );
}

function Header() {
  return (
    <header className="flex h-[110px] shrink-0 border-b-2 border-[#cfcfcf] bg-[#f8f8f8]">
      <div className="mr-[11px] flex w-[83px] items-center">
        <svg viewBox="0 0 83 100" className="h-[100px] w-full" aria-label="Logo">
          <path d="M0 0 H80 Q83 0 83 3 V97 Q83 100 80 100 H0 Z" fill="#2b86ff" />
          <g fill="none" stroke="#ffffff" strokeWidth="10">
            <path d="M-6 21 C 36 21 62 46 62 85" />
            <path d="M-6 41 C 26 41 43 58 43 85" />
            <path d="M-6 61 C 14 61 24 70 24 85" />
          </g>
        </svg>
      </div>
      <nav className="flex" aria-label="Main">
        {NAV.map(({ label, icon: Icon, active, size }) => (
          <a
            key={label}
            href="#"
            className={`flex items-center gap-[9px] whitespace-nowrap px-[13px] text-[31px] text-black ${active ? "bg-[#dddddd]" : ""}`}
          >
            <Icon className={size} />
            <span>{label}</span>
          </a>
        ))}
      </nav>
      <div className="ml-auto flex">
        <time className="flex items-center pr-[45px] text-[40px] font-bold">07:03</time>
        <button type="button" aria-label="Alerts" className="flex w-[71px] items-center justify-center border-l-2 border-[#c4c4c4] pb-1">
          <MdNotificationImportant className="h-[42px] w-[42px] text-[#fb0000]" />
        </button>
      </div>
    </header>
  );
}

const TABS = ["Fleet Status", "Vehicle", "History", "Fleet IO", "Nearest", "Idle"];

function SubNav() {
  return (
    <nav className="flex h-[111px] shrink-0 overflow-hidden border-b-2 border-[#c4c4c6] bg-[#f8f8f8]" aria-label="Fleet">
      <div className="-ml-[26px] flex">
        {TABS.map((t) => (
          <a
            key={t}
            href="#"
            className={`flex items-center whitespace-nowrap px-[13px] pt-0.5 text-[31px] text-black ${t === "History" ? "bg-[#dddddd]" : ""}`}
          >
            {t}
          </a>
        ))}
      </div>
    </nav>
  );
}

/* ---------- map pane ---------- */
const LOGO_LETTERS = [
  ["G", "text-[#4285f4]"],
  ["o", "text-[#ea4335]"],
  ["o", "text-[#fbbc05]"],
  ["g", "text-[#4285f4]"],
  ["l", "text-[#34a853]"],
  ["e", "text-[#ea4335]"],
];

function BoundaryIcon() {
  return (
    <svg viewBox="0 0 36 30" className="h-[30px] w-9 shrink-0" aria-hidden="true">
      <path d="M4 13 L13 4 H33 L22 15 L33 26 H4 Z" fill="#cfe0f3" stroke="#9dbbe0" strokeWidth="2" />
      <g fill="#f2f7fd" stroke="#8fb0dc" strokeWidth="1.5">
        <circle cx="4" cy="13" r="2.6" />
        <circle cx="13" cy="4" r="2.6" />
        <circle cx="33" cy="4" r="2.6" />
        <circle cx="22" cy="15" r="2.6" />
        <circle cx="33" cy="26" r="2.6" />
        <circle cx="4" cy="26" r="2.6" />
      </g>
    </svg>
  );
}

function MapPane() {
  return (
    <section className="relative min-w-0 overflow-hidden" aria-label="Map">
      <MapCanvas />

      <div className="absolute left-0 top-[21px] flex h-[88px] rounded-r shadow-[0_1px_5px_rgba(0,0,0,0.3)]">
        <button type="button" className="w-[176px] border-r-2 border-[#ececec] bg-white text-[39px] font-medium text-black">Map</button>
        <button type="button" className="w-[244px] rounded-r bg-white text-[39px] text-[#565656]">Satellite</button>
      </div>
      <button
        type="button"
        className="absolute left-[442px] top-[24px] h-[61px] w-[100px] rounded-sm bg-white text-[24px] font-medium text-black shadow-[0_1px_5px_rgba(0,0,0,0.3)]"
      >
        Traffic
      </button>
      <input
        type="text"
        aria-label="Find Address"
        placeholder="Find Address"
        className="absolute left-[575px] top-[24px] h-[64px] w-[691px] rounded-sm border border-[#b5b5b5] bg-white px-[14px] font-['DejaVu_Sans_Condensed','Noto_Sans',sans-serif] text-[29px] shadow-[0_2px_8px_rgba(0,0,0,0.3)] placeholder:text-[#7b7b7b]"
      />
      <button
        type="button"
        aria-label="Toggle fullscreen view"
        className="absolute right-[21px] top-[21px] flex h-[88px] w-[89px] items-center justify-center rounded bg-white shadow-[0_1px_5px_rgba(0,0,0,0.3)]"
      >
        <svg viewBox="0 0 42 42" className="h-[42px] w-[42px]" fill="none" stroke="#666666" strokeWidth="6">
          <path d="M3 14 V3 H14 M28 3 H39 V14 M39 28 V39 H28 M14 39 H3 V28" />
        </svg>
      </button>
      <button
        type="button"
        className="absolute left-[1071px] top-[106px] flex h-[52px] w-[285px] items-center whitespace-nowrap border-4 border-[#e9671c] bg-white pb-0.5 pl-1 text-[24px] text-[#565656]"
      >
        <BoundaryIcon />
        Create new boundary
      </button>

      <div className="absolute bottom-[53px] right-[21px] flex h-[178px] w-[89px] flex-col rounded bg-white shadow-[0_1px_5px_rgba(0,0,0,0.3)]">
        <button type="button" aria-label="Zoom in" className="flex flex-1 items-center justify-center">
          <svg viewBox="0 0 42 42" className="h-[42px] w-[42px]"><path d="M17 0h8v17h17v8H25v17h-8V25H0v-8h17z" fill="#666666" /></svg>
        </button>
        <span className="mx-[11px] h-px bg-[#dcdcdc]" />
        <button type="button" aria-label="Zoom out" className="flex flex-1 items-center justify-center">
          <svg viewBox="0 0 42 42" className="h-[42px] w-[42px]"><path d="M0 17h42v8H0z" fill="#666666" /></svg>
        </button>
      </div>

      <div className="absolute -left-[21px] bottom-0 flex font-['Lato',sans-serif] text-[46px] font-bold leading-[58px] [text-shadow:0_0_3px_#fff,0_0_3px_#fff,0_0_3px_#fff]">
        {LOGO_LETTERS.map(([l, c], i) => (
          <span key={i} className={c}>{l}</span>
        ))}
      </div>

      <div className="absolute bottom-0 right-0 flex h-[31px] items-center text-[22px] text-[#444444]">
        <span className="flex h-full items-center bg-[#f5f5f5]/70 pl-3 pr-[14px]">Map data ©2020 Google, INEGI</span>
        <span className="flex h-full items-center gap-2 bg-[#f5f5f5]/70 px-[14px]">
          100 km
          <span className="h-[12px] w-[103px] border-x-4 border-b-5 border-[#5f5f5f]" />
        </span>
        <a href="#" className="ml-0.5 flex h-full items-center bg-[#f5f5f5]/70 px-[13px]">Terms of Use</a>
      </div>
    </section>
  );
}

/* ---------- history table ---------- */
const MATEO = "[G] San Mateo Drive 9220 Laredo TX 78045";
const I35 = "I-35 S Laredo TX 78045";
const I69 = "[G] I-69W, Laredo, TX 78045, USA Laredo TX";

const ROWS = [
  [1, "2:18:08 AM", "0.00", "", I35],
  [2, "9:29:38 AM", "0.23", "WN", I35],
  [3, "9:43:27 AM", "0.00", "", "8400 FM-3464 Laredo TX 78045"],
  [4, "11:50:37 AM", "1.15", "NN", I35],
  [5, "12:08:47 PM", "1.15", "SS", I35],
  [6, "12:26:02 PM", "0.00", "", "[G] Lauren Lane 957 Laredo TX 78045"],
  [7, "6:47:38 PM", "0.00", "", MATEO],
  [8, "7:00:00 PM", "0.00", "", MATEO],
  [9, "7:03:32 PM", "0.00", "", MATEO],
  [10, "7:52:40 PM", "0.00", "", "[G] 10208 Union Pacific Blvd, Laredo, TX 78045, US Laredo TX"],
  [11, "8:06:45 PM", "0.00", "", MATEO],
  [12, "8:11:44 PM", "2.53", "SW", "8404 FM-3464 Laredo TX 78045"],
  [13, "8:30:30 PM", "0.69", "ES", "8403 FM-3464 Laredo TX 78045"],
  [14, "8:42:25 PM", "0.00", "", "8402 FM-3464 Laredo TX 78045"],
  [15, "9:05:46 PM", "0.00", "", I69],
  [16, "9:20:43 PM", "0.00", "", I69],
];

function Chevron({ d, className }) {
  return (
    <svg viewBox="0 0 16 16" className={className} fill="none" stroke="#505050" strokeWidth="3">
      <path d={d} />
    </svg>
  );
}

function HistoryTable() {
  return (
    <section className="flex min-w-0 flex-col overflow-hidden border-r-2 border-[#4a4a52] bg-[#f0f0f0]" aria-label="History">
      <div className="flex min-h-0 flex-1">
        <div className="min-w-0 flex-1 overflow-hidden bg-white">
          <table className="w-full table-fixed border-collapse text-left text-[29px] leading-9 text-black">
            <colgroup>
              <col className="w-[70px]" />
              <col className="w-[319px]" />
              <col className="w-[88px]" />
              <col className="w-[61px]" />
              <col className="w-[140px]" />
              <col />
            </colgroup>
            <thead>
              <tr className="h-[82px] bg-[#404a59] text-white">
                {["Num", "Time", "Speed", "Dir.", "Dist. Delta", "Address"].map((h) => (
                  <th key={h} className="whitespace-nowrap p-0 pl-[5px] font-normal">{h}</th>
                ))}
              </tr>
            </thead>
            <tbody>
              {ROWS.map(([num, time, speed, dir, address]) => {
                const selected = num === 8;
                const row = selected ? "h-[57px] bg-[#ff0000] text-[#3a0000]" : num % 2 ? "h-[58px] bg-white" : "h-[57px] bg-[#f7f7f7]";
                const cell = selected
                  ? "whitespace-nowrap border-l border-dashed border-white/70 p-0 pb-px pl-[7px] first:border-l-0"
                  : "whitespace-nowrap border-l border-white p-0 pb-px pl-[7px] first:border-l-0";
                return (
                  <tr key={num} className={row}>
                    <td className={cell}>{num}</td>
                    <td className={cell}>1/17/2020 {time}</td>
                    <td className={cell}>{speed}</td>
                    <td className={cell}>{dir}</td>
                    <td className={cell}>0.00</td>
                    <td className={cell}>{address}</td>
                  </tr>
                );
              })}
            </tbody>
          </table>
        </div>
        <div className="flex w-[24px] shrink-0 flex-col items-center overflow-hidden bg-[#f0f0f0]">
          <button type="button" aria-label="Scroll up" className="flex h-[34px] w-full items-center justify-center">
            <Chevron d="M2 12 L8 5 L14 12" className="h-5 w-5" />
          </button>
          <span className="h-[97px] w-full bg-[#cdcdcd]" />
          <button type="button" aria-label="Scroll down" className="mt-auto flex h-[34px] w-full items-center justify-center">
            <Chevron d="M2 5 L8 12 L14 5" className="h-5 w-5" />
          </button>
        </div>
      </div>
      <div className="flex h-[36px] shrink-0 items-center border-b-2 border-[#dcdcdc]">
        <button type="button" aria-label="Scroll left" className="flex w-[35px] justify-center">
          <Chevron d="M11 2 L5 8 L11 14" className="h-5 w-5" />
        </button>
        <span className="h-full w-[1300px] bg-[#cdcdcd]" />
        <button type="button" aria-label="Scroll right" className="ml-auto mr-[24px] flex w-[34px] justify-center">
          <Chevron d="M5 2 L11 8 L5 14" className="h-5 w-5" />
        </button>
      </div>
    </section>
  );
}

/* ---------- bottom controls ---------- */
function CalendarIcon() {
  return (
    <svg viewBox="0 0 34 33" className="h-[33px] w-[34px]" aria-hidden="true">
      <rect x="0" y="0" width="34" height="33" fill="#f3f3f3" />
      <rect x="0" y="0" width="34" height="6" fill="#a8a8a8" />
      <rect x="2" y="2" width="15" height="4" fill="#4646b0" />
      <path d="M7 6V31 M13 6V31 M19 6V31 M25 6V31 M1 12H32 M1 18H32 M1 24H32" stroke="#c9c9c9" strokeWidth="2" />
      <rect x="20" y="12" width="7" height="8" fill="#fff" stroke="#c64a4a" strokeWidth="2" />
      <path d="M0 32H33V0" fill="none" stroke="#6d6d6d" strokeWidth="2" />
    </svg>
  );
}

function CheckIcon() {
  return (
    <svg viewBox="0 0 80 62" className="h-[62px] w-20" aria-hidden="true">
      <defs>
        <linearGradient id="tick" x1="0" y1="0" x2="1" y2="1">
          <stop offset="0" stopColor="#c3f5a8" />
          <stop offset="0.35" stopColor="#7ddc55" />
          <stop offset="0.55" stopColor="#33b512" />
          <stop offset="1" stopColor="#7fe33f" />
        </linearGradient>
      </defs>
      <path d="M2 30 L14 15 L32 32 L64 2 L78 15 L32 60 Z" fill="url(#tick)" stroke="#2fae22" strokeWidth="2.5" strokeLinejoin="round" />
      <path d="M14 18 L32 35 L64 5 L69 9 Q48 33 31 38 Q18 38 6 30 Z" fill="#ffffff" opacity="0.4" />
    </svg>
  );
}

function MagnifierIcon() {
  return (
    <svg viewBox="0 0 68 70" className="h-[70px] w-[68px]" aria-hidden="true">
      <defs>
        <radialGradient id="lens" cx="0.5" cy="0.35" r="0.7">
          <stop offset="0" stopColor="#ffffff" />
          <stop offset="1" stopColor="#bcd9f8" />
        </radialGradient>
        <radialGradient id="ball" cx="0.4" cy="0.3" r="0.8">
          <stop offset="0" stopColor="#6f9df0" />
          <stop offset="1" stopColor="#0f3d9e" />
        </radialGradient>
      </defs>
      <path d="M40 42 L46 38 L64 64 Q64 68 60 68 Z" fill="#b4b4b4" stroke="#d7d7d7" strokeWidth="1" />
      <circle cx="23" cy="23" r="20" fill="url(#lens)" stroke="#a9a9ac" strokeWidth="3.5" />
      <circle cx="16" cy="55" r="14" fill="url(#ball)" />
      <text x="16" y="61" textAnchor="middle" className="fill-white font-['Roboto',sans-serif] text-[16px] font-bold">1:1</text>
    </svg>
  );
}

function RoundButton({ label, from, to, ring, children }) {
  const id = `disc-${label}`;
  return (
    <button type="button" aria-label={label}>
      <svg viewBox="0 0 60 62" className="h-[62px] w-[60px]">
        <defs>
          <linearGradient id={id} x1="0" y1="0" x2="0" y2="1">
            <stop offset="0" stopColor={from} />
            <stop offset="1" stopColor={to} />
          </linearGradient>
        </defs>
        <ellipse cx="30" cy="57" rx="22" ry="4" fill="#d2d2d2" />
        <circle cx="30" cy="30" r="27" fill={`url(#${id})`} stroke={ring} strokeWidth="3" />
        <circle cx="30" cy="30" r="24" fill="none" stroke="#ffffff" strokeOpacity="0.35" strokeWidth="2" />
        {children}
      </svg>
    </button>
  );
}

function DateField({ id, label, value }) {
  return (
    <div className="flex items-center">
      <label htmlFor={id} className="mr-2 whitespace-nowrap">{label}</label>
      <input
        id={id}
        type="text"
        defaultValue={value}
        className="h-[41px] w-[293px] border-2 border-[#8f8f8f] bg-white px-0.5 font-['DejaVu_Sans_Condensed','Noto_Sans',sans-serif] text-[29px]"
      />
      <button type="button" aria-label={`Pick ${label}`} className="pb-2"><CalendarIcon /></button>
    </div>
  );
}

function ShowOption({ label }) {
  return (
    <label className="flex h-[65px] items-center gap-2 whitespace-nowrap">
      <span className="relative flex">
        <input type="checkbox" defaultChecked className="peer h-[26px] w-[26px] appearance-none border-2 border-[#4b4b4b] bg-white" />
        <svg viewBox="0 0 26 26" className="pointer-events-none absolute inset-0 hidden h-[26px] w-[26px] peer-checked:block" fill="none" stroke="#3a3a3a" strokeWidth="2">
          <path d="M6 13 L11 18 L21 7" />
        </svg>
      </span>
      <span className="pt-[10px]">{label}</span>
    </label>
  );
}

function ControlPanel() {
  const box = "shrink-0 border-2 border-[#d4d4d4]";
  const legend = "px-1 leading-9";
  return (
    <form className="flex h-[170px] shrink-0 items-start gap-[17px] overflow-hidden bg-[#f8f8f8] pt-[10px] text-[31px] text-black">
      <fieldset className={`${box} -ml-[20px] h-[240px] w-[1458px]`}>
        <legend className={`ml-[5px] ${legend}`}>Time interval</legend>
        <div className="flex h-[122px] items-center gap-[10px] pl-[8px]">
          <div className="flex items-center">
            <label htmlFor="vehicle" className="mr-[10px]">Vehicle</label>
            <span className="relative flex">
              <select
                id="vehicle"
                defaultValue="Temp 012069"
                className="h-[42px] w-[286px] appearance-none border-2 border-[#8f8f8f] bg-white px-[7px] font-['DejaVu_Sans_Condensed','Noto_Sans',sans-serif] text-[29px] leading-[38px]"
              >
                <option>Temp 012069</option>
              </select>
              <svg viewBox="0 0 16 10" className="pointer-events-none absolute right-2 top-4 h-[10px] w-4" fill="none" stroke="#666" strokeWidth="1.5">
                <path d="M1 1 L8 8 L15 1" />
              </svg>
            </span>
          </div>
          <DateField id="start" label="Start Date" value="1/17/2020 12:00 AM" />
          <DateField id="end" label="End Date" value="1/20/2020 11:59 PM" />
          <button type="button" aria-label="Apply" className="pb-3"><CheckIcon /></button>
        </div>
      </fieldset>
      <fieldset className={`${box} h-[240px] w-[373px]`}>
        <legend className={`ml-1 ${legend}`}>Control</legend>
        <div className="flex items-start gap-[20px] pl-[10px] pt-[8px]">
          <button type="button" aria-label="Zoom to actual size" className="mt-[31px]"><MagnifierIcon /></button>
          <div className="flex flex-col">
            <ShowOption label="Show route lines" />
            <ShowOption label="Show waypoints" />
          </div>
        </div>
      </fieldset>
      <fieldset className={`${box} h-[240px] w-[264px]`}>
        <legend className={`ml-1 ${legend}`}>Play Route</legend>
        <div className="flex gap-[20px] pl-[15px] pt-[24px]">
          <RoundButton label="Play" from="#c3e424" to="#7fae10" ring="#5f8512">
            <path d="M22 19 L43 30 L22 42 Z" fill="#3f4043" />
          </RoundButton>
          <RoundButton label="Pause" from="#a9a9a9" to="#8c8c8c" ring="#6e6e6e">
            <path d="M19 18h9v26h-9z M32 18h9v26h-9z" fill="#434343" />
          </RoundButton>
          <RoundButton label="Stop" from="#5b5b5b" to="#6f6f6f" ring="#4a4a4a">
            <path d="M19 20h22v22H19z" fill="#f4f4f4" />
          </RoundButton>
        </div>
      </fieldset>
    </form>
  );
}

export default function App() {
  return (
    <div className="flex h-screen w-full flex-col overflow-hidden bg-[#f8f8f8] font-['Roboto',sans-serif]">
      <BookmarkBar />
      <Header />
      <SubNav />
      <main className="grid min-h-0 flex-1 grid-cols-2 grid-rows-1">
        <MapPane />
        <HistoryTable />
      </main>
      <ControlPanel />
    </div>
  );
}
